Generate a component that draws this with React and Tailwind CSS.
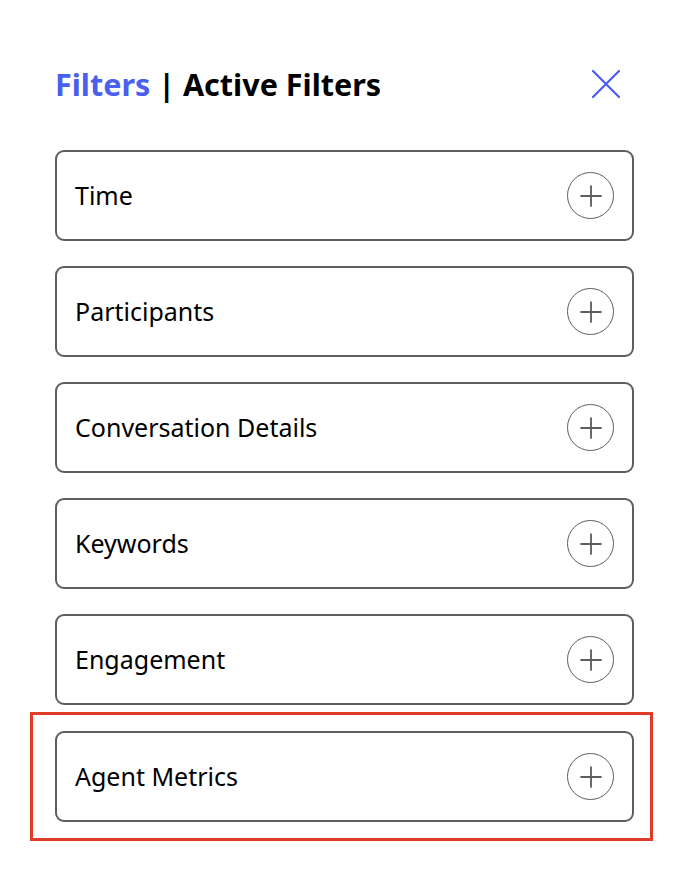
import { Plus } from "lucide-react";

const filters = ["Time", "Participants", "Conversation Details", "Keywords", "Engagement"];

function FilterCard({ label }) {
  return (
    <div className="flex h-[91px] w-[579px] items-center justify-between rounded-[9px] border-2 border-[#5e5e5e] pl-[18px] pr-[18px]">
      <span className="text-[25px] text-black">{label}</span>
      <span className="flex h-[47px] w-[47px] items-center justify-center rounded-full border-[1.5px] border-[#5e5e5e]">
        <Plus className="h-[34px] w-[34px] text-[#5e5e5e]" strokeWidth={1.3} />
      </span>
    </div>
  );
}

export default function App() {
  return (
    <div className="min-h-[884px] w-[688px] bg-white pt-[62px] font-['Noto_Sans',sans-serif]">
      <div className="flex items-center justify-between pl-[55px] pr-[68px]">
        <h1 className="text-[30.5px] font-bold leading-[44px] text-black">
          <span className="text-[#4a5ef0]">Filters</span> | Active Filters
        </h1>
        <svg width="30" height="30" viewBox="0 0 30 30" className="-mr-[1px]">
          <path d="M2 2 L28 28 M28 2 L2 28" stroke="#4a5ef0" strokeWidth="2.2" strokeLinecap="round" />
        </svg>
      </div>
      <div className="mt-[44px] flex flex-col gap-[25px] pl-[55px]">
        {filters.map((f) => (
          <FilterCard key={f} label={f} />
        ))}
      </div>
      <div className="ml-[30px] mt-[7px] w-[623px] border-[3px] border-[#e03c2a] pb-[16px] pl-[22px] pt-[16px]">
        <FilterCard label="Agent Metrics" />
      </div>
    </div>
  );
}
